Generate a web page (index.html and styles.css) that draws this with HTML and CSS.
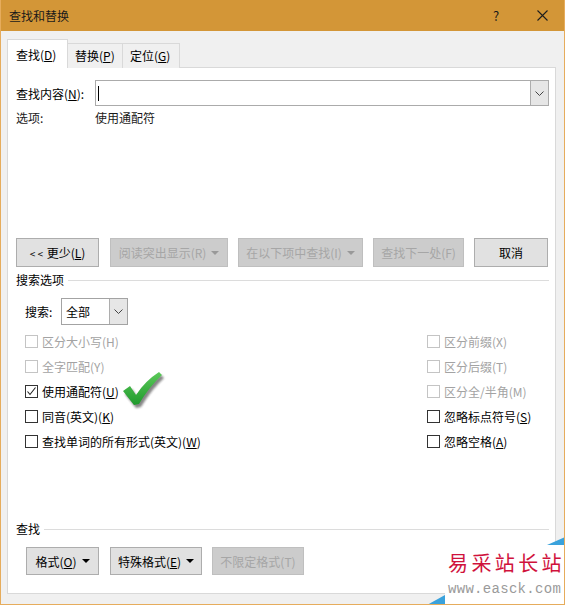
FILE: index.html
```html
<!DOCTYPE html>
<html lang="zh-CN">
<head>
    <meta charset="UTF-8">
    <title>查找和替换</title>
    <link rel="stylesheet" href="styles.css">
</head>
<body>

    <div class="window">
        <!-- title bar -->
        <div class="titlebar">
            <span class="title">查找和替换</span>
            <div class="caption">
                <span class="cap-btn">?</span>
                <span class="cap-btn">
                    <svg width="11" height="11" viewBox="0 0 11 11"><path d="M0.5 0.5 L10.5 10.5 M10.5 0.5 L0.5 10.5" stroke="#1e1e1e" stroke-width="1.1" fill="none"/></svg>
                </span>
            </div>
        </div>

        <div class="client">
            <div class="tabs">
                <div class="tab tab-find active">查找(<u>D</u>)</div>
                <div class="tab tab-replace">替换(<u>P</u>)</div>
                <div class="tab tab-goto">定位(<u>G</u>)</div>
            </div>

            <div class="panel">
                <div class="find-row">
                    <span class="row-label">查找内容(<u>N</u>):</span>
                    <div class="combo">
                        <span class="caret"></span>
                        <span class="combo-arrow">
                            <svg width="9" height="5" viewBox="0 0 9 5"><polyline points="0.5,0.5 4.5,4.5 8.5,0.5" stroke="#444" fill="none"/></svg>
                        </span>
                    </div>
                </div>
                <div class="options-row">
                    <span class="row-label">选项:</span>
                    <span>使用通配符</span>
                </div>

                <div class="btn-row">
                    <div class="btn w-less"><span><span class="lt">&lt; &lt;</span> 更少(<u>L</u>)</span></div>
                    <div class="btn disabled w-read"><span>阅读突出显示(R)</span><span class="arrow"></span></div>
                    <div class="btn disabled w-in"><span>在以下项中查找(I)</span><span class="arrow"></span></div>
                    <div class="btn disabled w-next"><span>查找下一处(F)</span></div>
                    <div class="btn w-cancel"><span>取消</span></div>
                </div>

                <div class="group-head">搜索选项</div>

                <div class="search-row">
                    <span class="search-label">搜索:</span>
                    <div class="select">
                        <span class="select-value">全部</span>
                        <span class="combo-arrow">
                            <svg width="9" height="5" viewBox="0 0 9 5"><polyline points="0.5,0.5 4.5,4.5 8.5,0.5" stroke="#444" fill="none"/></svg>
                        </span>
                    </div>
                </div>

                <div class="checks">
                    <div class="check disabled"><span class="box"></span>区分大小写(H)</div>
                    <div class="check disabled"><span class="box"></span>区分前缀(X)</div>
                    <div class="check disabled"><span class="box"></span>全字匹配(Y)</div>
                    <div class="check disabled"><span class="box"></span>区分后缀(T)</div>
                    <div class="check"><span class="box"><svg width="11" height="11" viewBox="0 0 11 11"><polyline points="1.5,5.5 4,8.5 9.5,1.5" stroke="#222" stroke-width="1.1" fill="none"/></svg></span>使用通配符(<u>U</u>)</div>
                    <div class="check disabled"><span class="box"></span>区分全/半角(M)</div>
                    <div class="check"><span class="box"></span>同音(英文)(<u>K</u>)</div>
                    <div class="check"><span class="box"></span>忽略标点符号(<u>S</u>)</div>
                    <div class="check"><span class="box"></span>查找单词的所有形式(英文)(<u>W</u>)</div>
                    <div class="check"><span class="box"></span>忽略空格(<u>A</u>)</div>
                </div>

                <div class="group-head find-head">查找</div>

                <div class="btn-row bottom-row">
                    <div class="btn short w-format"><span>格式(<u>O</u>)</span><span class="arrow"></span></div>
                    <div class="btn short w-special"><span>特殊格式(<u>E</u>)</span><span class="arrow"></span></div>
                    <div class="btn short disabled w-special"><span>不限定格式(T)</span></div>
                </div>

                <!-- green tick drawn over the dialog -->
                <svg class="tick" width="46" height="40" viewBox="0 0 46 40">
                    <defs>
                        <linearGradient id="g" x1="0" y1="0" x2="0" y2="1">
                            <stop offset="0" stop-color="#5cc95a"/>
                            <stop offset="1" stop-color="#1f9a2c"/>
                        </linearGradient>
                        <filter id="blur"><feGaussianBlur stdDeviation="1.2"/></filter>
                    </defs>
                    <path d="M2 21 L9 16 L15 25 Q24 11 38 2 L41 5 Q28 17 18 34 L13 35 Z" fill="#222" opacity="0.55" filter="url(#blur)" transform="translate(2 3)"/>
                    <path d="M2 21 L9 16 L15 25 Q24 11 38 2 L41 5 Q28 17 18 34 L13 35 Z" fill="url(#g)"/>
                </svg>
            </div>
        </div>

        <div class="watermark">
            <div class="wm-name">易采站长站</div>
            <div class="wm-url">www.easck.com</div>
        </div>
    </div>

</body>
</html>
```

FILE: styles.css
```css
body {
    margin: 0;
    font-family: "Noto Sans CJK SC", sans-serif;
    font-size: 12px;
    color: #000;
    background: #fff;
    text-autospace: no-autospace;
    text-spacing-trim: space-all;
}
u {
    text-underline-offset: 1px;
}
.window {
    position: relative;
    width: 565px;
    height: 605px;
    box-sizing: border-box;
    background: #f0f0f0;
    border: 1px solid #e6ac5c;
    border-top: none;
    display: flex;
    flex-direction: column;
    overflow: hidden;
}
.titlebar {
    height: 31px;
    margin: 0 -1px;
    padding-left: 9px;
    background: #d39637;
    display: flex;
    align-items: center;
    color: #1a1a1a;
}
.caption {
    margin-left: auto;
    display: flex;
}
.cap-btn {
    width: 46px;
    height: 31px;
    display: flex;
    align-items: center;
    justify-content: center;
    font-size: 13px;
}
.client {
    flex: 1;
    padding: 8px 8px 10px 6px;
    display: flex;
    flex-direction: column;
}
.tabs {
    display: flex;
    align-items: flex-end;
    height: 29px;
    margin-bottom: -1px;
    position: relative;
    z-index: 1;
}
.tab {
    box-sizing: border-box;
    height: 25px;
    line-height: 24px;
    padding-left: 7px;
    border: 1px solid #d9d9d9;
    border-bottom: none;
    border-left: none;
    background: #f0f0f0;
}
.tab.active {
    height: 29px;
    line-height: 30px;
    padding-left: 8px;
    background: #fff;
    border-left: 1px solid #d9d9d9;
}
.tab-find { width: 61px; }
.tab-replace { width: 55px; }
.tab-goto { width: 57px; }
.panel {
    flex: 1;
    position: relative;
    background: #fff;
    border: 1px solid #d9d9d9;
    padding: 12px 6px 0 8px;
}
.find-row {
    display: flex;
    align-items: center;
}
.row-label {
    width: 79px;
    flex-shrink: 0;
}
.combo {
    flex: 1;
    height: 26px;
    box-sizing: border-box;
    border: 1px solid #ababab;
    display: flex;
    align-items: center;
}
.caret {
    width: 1px;
    height: 15px;
    margin-left: 2px;
    background: #000;
}
.combo-arrow {
    margin-left: auto;
    width: 17px;
    align-self: stretch;
    background: #e6e6e6;
    border-left: 1px solid #adadad;
    display: flex;
    align-items: center;
    justify-content: center;
}
.options-row {
    display: flex;
    margin-top: 3px;
    line-height: 18px;
    color: #1a1a1a;
}
.btn-row {
    display: flex;
    gap: 10px;
    margin-top: 111px;
}
.btn {
    box-sizing: border-box;
    height: 29px;
    border: 1px solid #adadad;
    background: #e1e1e1;
    display: flex;
    align-items: center;
    justify-content: center;
    gap: 5px;
    white-space: nowrap;
}
.btn.disabled {
    background: #cccccc;
    border-color: #bfbfbf;
    color: #a6a6a6;
}
.lt {
    font-size: 10px;
    margin-right: 1px;
}
.arrow {
    width: 0;
    height: 0;
    border-left: 4px solid transparent;
    border-right: 4px solid transparent;
    border-top: 4px solid currentColor;
}
.btn.disabled .arrow {
    border-top-color: #999;
}
.w-less { width: 83px; margin-right: 1px; }
.w-read { width: 118px; }
.w-in { width: 125px; }
.w-next { width: 91px; }
.w-cancel { width: 74px; }
.group-head {
    display: flex;
    align-items: center;
    gap: 4px;
    margin-top: 5px;
    line-height: 16px;
}
.group-head::after {
    content: "";
    flex: 1;
    height: 1px;
    background: #dcdcdc;
}
.search-row {
    display: flex;
    align-items: center;
    margin-top: 10px;
    padding-left: 9px;
}
.search-label {
    width: 36px;
}
.select {
    width: 67px;
    height: 27px;
    box-sizing: border-box;
    border: 1px solid #a3a3a3;
    display: flex;
    align-items: center;
}
.select-value {
    padding-left: 4px;
}
.checks {
    display: grid;
    grid-template-columns: 402px 1fr;
    margin-top: 4px;
    padding-left: 9px;
}
.check {
    height: 25px;
    display: flex;
    align-items: center;
    white-space: pre;
}
.box {
    width: 13px;
    height: 13px;
    margin-right: 4px;
    box-sizing: border-box;
    border: 1px solid #333;
    background: #fff;
    display: flex;
    align-items: center;
    justify-content: center;
}
.check.disabled {
    color: #a3a3a3;
}
.check.disabled .box {
    border-color: #c4c4c4;
}
.find-head {
    margin-top: 67px;
}
.bottom-row {
    margin-top: 10px;
    padding-left: 10px;
}
.btn.short {
    height: 28px;
}
.w-format { width: 73px; margin-right: 1px; }
.w-special { width: 92px; }
.tick {
    position: absolute;
    left: 113px;
    top: 302px;
}
.watermark {
    position: absolute;
    right: -1px;
    bottom: -1px;
    width: 120px;
    height: 60px;
    background: #fff;
    padding-left: 3px;
    box-sizing: border-box;
}
.watermark::before {
    content: "";
    position: absolute;
    right: 0;
    top: -8px;
    width: 18px;
    height: 8px;
    background: #3aa2dc;
    clip-path: polygon(100% 0, 100% 100%, 0 100%);
}
.watermark::after {
    content: "";
    position: absolute;
    left: -18px;
    bottom: 0;
    width: 18px;
    height: 10px;
    background: #3aa2dc;
    clip-path: polygon(100% 0, 100% 100%, 0 100%);
}
.wm-name {
    margin-top: 5px;
    font-size: 20px;
    line-height: 26px;
    letter-spacing: 3.4px;
    color: #d0123c;
    white-space: nowrap;
}
.wm-url {
    margin-top: 6px;
    font-family: "Liberation Mono", monospace;
    font-size: 14px;
    line-height: 14px;
    letter-spacing: 0.3px;
    color: #9a9a9a;
    white-space: nowrap;
}
```
